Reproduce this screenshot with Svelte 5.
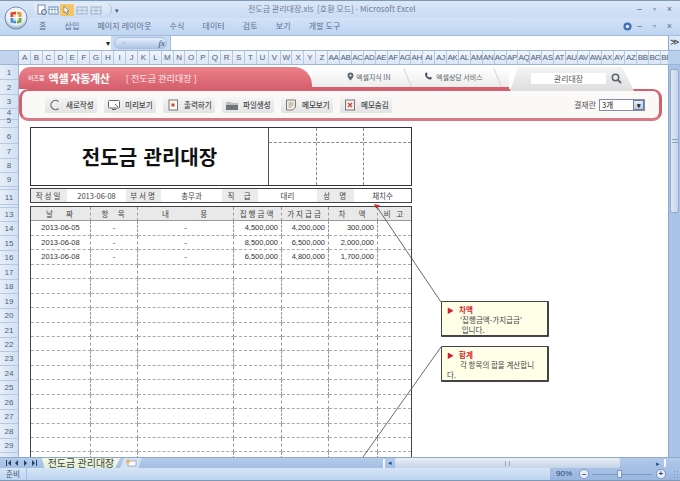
<script>
  const ribbonTabs = ['홈', '삽입', '페이지 레이아웃', '수식', '데이터', '검토', '보기', '개발 도구'];
  const letters = 'ABCDEFGHIJKLMNOPQRSTUVWXYZ'.split('');
  const cols = [...letters, ...letters.map((l) => 'A' + l), 'BB', 'BC', 'BD'];
  const rowHeads = [
    [1, 15], [2, 14.5], [3, 14.5], [4, 11], [5, 8], [6, 16], [7, 14.5], [8, 14.5], [9, 14], ['', 3], [11, 15], ['', 1]
  ];
  for (let n = 13; n <= 29; n++) rowHeads.push([n, n === 13 ? 14 : 14.44]);
  rowHeads.push(['', 14.44]);
  const tools = [
    ['새로작성', 'new'], ['미리보기', 'view'], ['출력하기', 'print'],
    ['파일생성', 'file'], ['메모보기', 'memo'], ['메모숨김', 'hide']
  ];
  const headers = ['날   짜', '항  목', '내        용', '집행금액', '가지급금', '차   액', '비 고'];
  const data = [
    ['2013-06-05', '-', '-', '4,500,000', '4,200,000', '300,000', ''],
    ['2013-06-08', '-', '-', '8,500,000', '6,500,000', '2,000,000', ''],
    ['2013-06-08', '-', '-', '6,500,000', '4,800,000', '1,700,000', '']
  ];
  const rows = [...data];
  while (rows.length < 17) rows.push(['', '', '', '', '', '', '']);
</script>

<div class="app">
  <svg class="orb" width="24" height="24" viewBox="0 0 26 26">
    <defs>
      <radialGradient id="orbg" cx="50%" cy="35%" r="65%">
        <stop offset="0" stop-color="#ffffff" />
        <stop offset="0.7" stop-color="#e6edf6" />
        <stop offset="1" stop-color="#8ea3bf" />
      </radialGradient>
    </defs>
    <circle cx="13" cy="13" r="12" fill="url(#orbg)" stroke="#6f86a6" />
    <path d="M7 7 L13 6 L13 12 L7 12 Z" fill="#d9482b" />
    <path d="M14 6 L19 7 L19 12 L14 12 Z" fill="#e09a2a" />
    <path d="M7 13 L13 13 L13 19 L7 18 Z" fill="#4a8fd0" />
    <path d="M14 13 L19 13 L19 18 L14 19 Z" fill="#78a83a" />
    <rect x="10" y="9" width="6" height="7" fill="#fff" opacity="0.75" />
  </svg>

  <header class="titlebar">
    <div class="qat">
      <svg width="76" height="12" viewBox="0 0 76 12">
        <rect x="25" y="0" width="14" height="12" rx="1" fill="#f6c56a" />
        <rect x="3" y="1" width="7" height="9" fill="#fff" stroke="#7a8798" />
        <circle cx="9" cy="8" r="2.4" fill="#cfe0f2" stroke="#55657c" />
        <rect x="14" y="3" width="9" height="7" fill="#fff" stroke="#6d8fb8" />
        <path d="M14 5.5h9M17 3v7M20 3v7" stroke="#6d8fb8" stroke-width="0.7" />
        <path d="M29 2l5 5-2.2.2 1.2 2.6-1.2.5-1.2-2.6L29 9z" fill="#fff" stroke="#566" stroke-width="0.6" />
        <rect x="42" y="3" width="10" height="7" fill="#dbe5f1" stroke="#9fb2c9" />
        <path d="M42 6.5h10M47 3v7" stroke="#9fb2c9" stroke-width="0.7" />
        <rect x="56" y="3" width="10" height="7" fill="#dbe5f1" stroke="#9fb2c9" />
        <path d="M56 6.5h10M61 3v7" stroke="#9fb2c9" stroke-width="0.7" />
      </svg>
    </div>
    <span class="qatarrow">▾</span>
    <div class="wintitle">전도금 관리대장.xls  [호환 모드] - Microsoft Excel</div>
    <div class="winbtns"><span>–</span><span>▫</span><span>×</span></div>
  </header>

  <nav class="ribbon">
    <div class="rtabs">
      {#each ribbonTabs as t}<span>{t}</span>{/each}
    </div>
    <div class="rhelp">
      <svg class="help" width="9" height="9" viewBox="0 0 10 10"><circle cx="5" cy="5" r="4.5" fill="#3d6fb5" /><circle cx="5" cy="5" r="2" fill="#dfe9f6" /></svg>
      <span>–</span><span>▫</span><span>×</span>
    </div>
  </nav>

  <div class="fbar">
    <div class="namebox"><span>▾</span></div>
    <div class="fxpill"><span class="circ">◦</span><i>fx</i></div>
    <div class="finput"></div>
    <div class="fexpand">≫</div>
  </div>

  <div class="colhead">
    <div class="corner"></div>
    {#each cols as c}<div class="col">{c}</div>{/each}
    <div class="colscroll"></div>
  </div>

  <div class="main">
    <div class="rownums">
      {#each rowHeads as r}
        <div class="rownum" style="height:{r[1]}px">{r[0]}</div>
      {/each}
    </div>

    <div class="sheet">
      <section class="banner">
        <div class="bhead">
          <div class="pinkhead">
            <span class="brand">비즈몸</span>
            <strong>엑셀 자동계산</strong>
            <span class="sub">[ 전도금 관리대장 ]</span>
          </div>
          <div class="links">
            <div class="link one">
              <svg width="7" height="9" viewBox="0 0 7 9"><path d="M3.5 0.5a3 3 0 0 1 3 3c0 2-3 5-3 5s-3-3-3-5a3 3 0 0 1 3-3z" fill="#5d6b72" /><circle cx="3.5" cy="3.4" r="1" fill="#fff" /></svg>
              엑셀지식 IN
            </div>
            <div class="link two">
              <svg width="10" height="9" viewBox="0 0 10 9"><path d="M1 1.5c0 3.5 2.5 6 6 6l1-1.7-2-1-.8.8C4 4.900 3.200 4 2.800 3l.9-.8-1-2z" fill="#46525a" /></svg>
              엑셀상담 서비스
            </div>
          </div>
          <div class="searchtab">
            <div class="searchbox">관리대장</div>
            <svg width="11" height="11" viewBox="0 0 11 11"><circle cx="4.500" cy="4.500" r="3.200" fill="none" stroke="#5a6670" stroke-width="1.500" /><path d="M7 7l3 3" stroke="#5a6670" stroke-width="1.800" /></svg>
          </div>
        </div>
        <div class="panel">
          <div class="tools">
            {#each tools as tool}
              <div class="tool">
                <svg width="14" height="12" viewBox="0 0 14 12">
                  {#if tool[1] === 'new'}
                    <path d="M10.500 2.500A4.600 4.600 0 1 0 10.500 9.500" fill="none" stroke="#6f7377" stroke-width="1.300" />
                  {:else if tool[1] === 'view'}
                    <rect x="1.500" y="1.500" width="11" height="7.500" rx="1" fill="#fff" stroke="#666" />
                    <path d="M5 10.500h4M8 5l3 3" stroke="#666" />
                  {:else if tool[1] === 'print'}
                    <rect x="3" y="1" width="8.500" height="10" fill="#fdf7ef" stroke="#777" />
                    <rect x="5.500" y="4.500" width="3" height="3" fill="#c0503d" />
                  {:else if tool[1] === 'file'}
                    <path d="M1 3h4l1 1h7v7H1z" fill="#6f7478" />
                    <path d="M1 3h4l1 1h7v2H1z" fill="#b9bdc0" />
                  {:else if tool[1] === 'memo'}
                    <path d="M2.500 1h9v7l-3 3h-6z" fill="#f6efe0" stroke="#777" />
                    <path d="M4.500 4h5M4.500 6h5M4.500 8h3" stroke="#999" />
                  {:else}
                    <rect x="2.500" y="1" width="9" height="10" fill="#f9ecea" stroke="#777" />
                    <path d="M5 4l4 4M9 4l-4 4" stroke="#b8473a" stroke-width="1.200" />
                  {/if}
                </svg>
                <span>{tool[0]}</span>
              </div>
            {/each}
          </div>
          <div class="approval">
            <span>결재란</span>
            <div class="select">3개<b>▾</b></div>
          </div>
        </div>
      </section>

      <section class="titleblock">
        <div class="bigtitle">전도금 관리대장</div>
        <div class="sign">
          {#each Array(3) as _}
            <div class="signcol"><div></div><div></div></div>
          {/each}
        </div>
      </section>

      <section class="info">
        <div class="k">작성일</div><div class="v">2013-06-08</div>
        <div class="k">부서명</div><div class="v">총무과</div>
        <div class="k">직  급</div><div class="v">대리</div>
        <div class="k">성  명</div><div class="v">채치수</div>
      </section>

      <section class="ledger">
        {#each headers as h}<div class="th">{h}</div>{/each}
        {#each rows as row}
          {#each row as cell, i}
            <div class="td" class:num={i >= 3} class:ctr={i < 3}>{cell}</div>
          {/each}
        {/each}
      </section>

      <svg class="leaders" width="649" height="392" viewBox="0 0 649 392">
        <path d="M422 237L358 142" stroke="#444" stroke-width="0.800" />
        <path d="M355 139l6 1.500-3.800 3z" fill="#d21f2b" />
        <path d="M422 282L344 392" stroke="#444" stroke-width="0.800" />
      </svg>

      <aside class="note first">
        <div class="ntitle"><em>▶</em><b>차액</b></div>
        <p class="ind">'집행금액-가지급금'<br />&nbsp;입니다.</p>
      </aside>
      <aside class="note second">
        <div class="ntitle"><em>▶</em><b>합계</b></div>
        <p class="ind">각 항목의 합을 계산합니<br /><span class="out">다.</span></p>
      </aside>
    </div>

    <div class="vscroll">
      <div class="vthumb"><i></i></div>
    </div>
  </div>

  <div class="sheetbar">
    <div class="nav">
      <svg width="34" height="8" viewBox="0 0 34 8" fill="#23406b">
        <path d="M1 1h1v6H1zM6 1v6L3 4zM13 1v6l-3-3zM19 1v6l3-3zM27 1v6l3-3zM31 1h1v6h-1z" />
      </svg>
    </div>
    <div class="stab">전도금 관리대장</div>
    <div class="newtab">
      <svg width="12" height="8" viewBox="0 0 12 8"><rect x="3" y="2" width="8" height="5" fill="#fff" stroke="#7f93ad" stroke-width="0.700" /><circle cx="3" cy="2.500" r="2" fill="#e8b75a" /></svg>
    </div>
    <div class="barfill"></div>
    <div class="hsplit"></div>
    <div class="harrow">◂</div>
    <div class="htrack"><i></i></div>
    <div class="hright"><span>▸</span><u></u></div>
  </div>

  <footer class="status">
    <span class="ready">준비</span>
    <div class="zoomarea">
      <span class="pct">90%</span>
      <span class="zbtn">–</span>
      <span class="zslider"><i></i></span>
      <span class="zbtn">+</span>
      <span class="grip"></span>
    </div>
  </footer>
</div>

<style>
  :global(body) {
    margin: 0;
    background: #fff;
  }
  * {
    box-sizing: border-box;
  }
  .app {
    position: relative;
    width: 680px;
    height: 481px;
    overflow: hidden;
    display: flex;
    flex-direction: column;
    font-family: 'Noto Sans CJK KR', 'Liberation Sans', sans-serif;
    color: #333;
    background: #c4d8f1;
    border-top: 1px solid #7e98b8;
  }
  .orb {
    position: absolute;
    left: 4px;
    top: 5px;
    z-index: 3;
  }

  .titlebar {
    height: 17px;
    flex: none;
    display: flex;
    align-items: center;
    background: linear-gradient(#dbe8f8, #c9dcf4);
    position: relative;
    padding-left: 34px;
  }
  .qat {
    height: 13px;
    width: 78px;
    display: flex;
    align-items: center;
    padding-left: 1px;
    background: linear-gradient(#e4eefa, #d0e0f4);
    border-radius: 3px 8px 8px 3px;
    border-right: 1px solid #a9bfdc;
  }
  .qatarrow {
    font-size: 7px;
    margin-left: 3px;
    color: #44556e;
  }
  .wintitle {
    position: absolute;
    left: 248px;
    top: 2px;
    font-size: 8px;
    line-height: 12px;
    white-space: pre;
    color: #6d7d94;
  }
  .winbtns,
  .rhelp {
    position: absolute;
    right: 7px;
    top: 3px;
    display: flex;
    gap: 8px;
    align-items: center;
    font: 9px/10px 'Liberation Sans', sans-serif;
    color: #5a6c86;
  }
  .winbtns span,
  .rhelp span {
    width: 7px;
    text-align: center;
  }
  .help {
    margin-right: -4px;
  }

  .ribbon {
    height: 17px;
    flex: none;
    position: relative;
    background: linear-gradient(#d4e3f7, #bdd4f1);
  }
  .rtabs {
    display: flex;
    gap: 18px;
    padding-left: 39px;
    font-size: 8px;
    letter-spacing: 0.1px;
    line-height: 16px;
    color: #5b6e8e;
    white-space: nowrap;
  }

  .fbar {
    height: 16px;
    flex: none;
    display: flex;
    align-items: stretch;
    background: #c9dbf2;
    border-top: 1px solid #a6bdd9;
    border-bottom: 1px solid #9db6d5;
  }
  .namebox {
    width: 111px;
    background: #fff;
    text-align: right;
    padding-right: 1px;
    font-size: 8px;
    line-height: 13px;
    color: #222;
  }
  .fxpill {
    width: 53px;
    margin: 1px 3px;
    border-radius: 6px;
    background: linear-gradient(#e5eefb, #aec6e6);
    border: 1px solid #a9bfdc;
    display: flex;
    justify-content: space-between;
    align-items: center;
    padding: 0 1px 0 7px;
    font: 9px/10px 'Liberation Serif', serif;
    color: #3c4a5e;
  }
  .circ {
    color: #8ca5c4;
  }
  .finput {
    flex: 1;
    background: #fff;
    border-left: 1px solid #a6bdd9;
  }
  .fexpand {
    width: 12px;
    background: #dce8f7;
    border-left: 1px solid #8ca8c9;
    font: 9px/13px 'Liberation Sans', sans-serif;
    text-align: center;
    color: #333;
  }

  .colhead {
    height: 14px;
    flex: none;
    display: flex;
    overflow: hidden;
    position: relative;
    background: linear-gradient(#f1f5fb, #dbe6f5);
    border-bottom: 1px solid #9db6d5;
  }
  .corner {
    width: 19px;
    flex: none;
    background: #c3d5ec;
    border-right: 1px solid #9db6d5;
  }
  .col {
    width: 11.9px;
    flex: none;
    border-right: 1px solid #b5c9e2;
    font: 8px/13px 'Liberation Sans', sans-serif;
    letter-spacing: -0.3px;
    text-align: center;
    color: #4e6078;
    white-space: nowrap;
    overflow: hidden;
  }
  .colscroll {
    position: absolute;
    right: 0;
    top: 0;
    width: 12px;
    height: 13px;
    background: #b9cfeb;
  }

  .main {
    height: 392px;
    flex: none;
    display: flex;
    overflow: hidden;
    background: #fff;
  }
  .rownums {
    width: 19px;
    flex: none;
    background: linear-gradient(90deg, #e6eef9, #d2e0f2);
    border-right: 1px solid #9db6d5;
  }
  .rownum {
    border-bottom: 1px solid #b5c9e2;
    font: 8px/9px 'Liberation Sans', sans-serif;
    display: flex;
    align-items: flex-end;
    justify-content: center;
    padding-bottom: 2px;
    color: #4e6078;
    overflow: visible;
  }

  .sheet {
    position: relative;
    width: 649px;
    flex: none;
    overflow: hidden;
    padding-top: 2px;
    background: #fff;
  }

  .banner {
    width: 643px;
  }
  .bhead {
    height: 22px;
    display: flex;
    align-items: stretch;
  }
  .pinkhead {
    width: 293px;
    flex: none;
    display: flex;
    align-items: center;
    padding: 0 0 0 9px;
    color: #fff;
    background: linear-gradient(#ec8189, #d55f6d);
    border-radius: 11px 18px 0 0;
    white-space: nowrap;
  }
  .brand {
    font-size: 6px;
    margin-right: 4px;
    margin-bottom: 2px;
  }
  .pinkhead strong {
    font-size: 11px;
    letter-spacing: -0.3px;
    margin-right: 16px;
    margin-bottom: 1px;
  }
  .sub {
    font-size: 9px;
    letter-spacing: 0.1px;
    color: #fde9ea;
  }
  .links {
    width: 197px;
    flex: none;
    display: flex;
    font-size: 7px;
    color: #59656c;
    white-space: nowrap;
    border-bottom: 2px solid #d55f6d;
    background: linear-gradient(#ffffff, #ececec);
    margin-top: 1px;
  }
  .link {
    position: relative;
    display: flex;
    align-items: center;
    gap: 2px;
    line-height: 8px;
    padding-bottom: 2px;
  }
  .one {
    padding-left: 35px;
    width: 99px;
  }
  .one::after,
  .two::after {
    content: '';
    position: absolute;
    right: 3px;
    top: 0;
    bottom: 0;
    width: 1px;
    background: #d4d4d4;
    transform: skewX(22deg);
  }
  .two {
    padding-left: 13px;
    width: 90px;
  }
  .searchtab {
    width: 124px;
    flex: none;
    height: 24px;
    margin-left: 1px;
    position: relative;
    z-index: 1;
    display: flex;
    align-items: center;
    gap: 5px;
    padding: 0 0 2px 21px;
    background: linear-gradient(#f4f4f4, #dedede);
    clip-path: polygon(8px 0, 112px 0, 124px 100%, 0 100%);
  }
  .searchbox {
    width: 75px;
    height: 11px;
    background: #fff;
    font-size: 8px;
    line-height: 11px;
    text-align: center;
    color: #555;
  }
  .panel {
    height: 32px;
    display: flex;
    align-items: center;
    justify-content: space-between;
    background: #fbf9f8;
    border: 3px solid #d55f6d;
    border-top-width: 2px;
    border-bottom-color: #d87984;
    border-radius: 9px;
    padding: 0 14px 0 23px;
  }
  .tools {
    display: flex;
    gap: 7px;
  }
  .tool {
    width: 52px;
    height: 16px;
    display: flex;
    align-items: center;
    gap: 4px;
    padding-left: 3px;
    background: linear-gradient(#f5f5f5, #e3e3e3);
    border-radius: 2px;
    font-size: 7.500px;
    font-weight: 500;
    color: #484848;
    white-space: nowrap;
    flex: none;
  }
  .approval {
    display: flex;
    align-items: center;
    gap: 3px;
    font-size: 8px;
    color: #555;
  }
  .select {
    width: 46px;
    height: 12px;
    background: #fff;
    border: 1px solid #88a;
    font-size: 7.500px;
    line-height: 10px;
    padding-left: 2px;
    display: flex;
    justify-content: space-between;
    color: #222;
  }
  .select b {
    width: 11px;
    background: linear-gradient(#e6edf7, #b7c8e1);
    border: 1px solid #6c7fa0;
    text-align: center;
    font-size: 7px;
    line-height: 8px;
  }

  .titleblock,
  .info,
  .ledger {
    margin-left: 11px;
    width: 382px;
  }
  .titleblock {
    margin-top: 6px;
    height: 59px;
    display: flex;
    border: 1px solid #333;
  }
  .bigtitle {
    width: 238px;
    flex: none;
    border-right: 1px solid #555;
    font-size: 20px;
    font-weight: 700;
    line-height: 57px;
    text-align: center;
    color: #111;
    word-spacing: 2px;
  }
  .sign {
    flex: 1;
    display: flex;
  }
  .signcol {
    flex: 1;
    border-right: 1px dashed #888;
    display: flex;
    flex-direction: column;
  }
  .signcol:last-child {
    border-right: 0;
  }
  .signcol div:first-child {
    height: 15px;
    border-bottom: 1px dashed #888;
  }

  .info {
    margin-top: 2px;
    height: 15px;
    display: grid;
    grid-template-columns: 36px 59px 35px 61px 36px 59px 37px 1fr;
    border: 1px solid #444;
    font-size: 7.500px;
    line-height: 13px;
    text-align: center;
  }
  .k {
    background: #ebebeb;
    letter-spacing: 2px;
    white-space: pre;
    color: #444;
  }
  .v {
    color: #444;
  }

  .ledger {
    margin-top: 3px;
    display: grid;
    grid-template-columns: 60px 47px 96px 48px 47px 49px 1fr;
    grid-auto-rows: 14.44px;
    border: 1px solid #444;
    border-bottom: 0;
    font-size: 7.500px;
  }
  .th,
  .td {
    border-right: 1px dashed #999;
    border-bottom: 1px dashed #aaa;
    line-height: 13px;
    white-space: pre;
    overflow: hidden;
  }
  .th:nth-child(7n),
  .td:nth-child(7n) {
    border-right: 0;
  }
  .th {
    background: #e9e9e9;
    text-align: center;
    letter-spacing: 2px;
    color: #444;
    border-bottom: 1px solid #999;
  }
  .td {
    font-family: 'Liberation Sans', sans-serif;
    color: #333;
  }
  .ctr {
    text-align: center;
  }
  .num {
    text-align: right;
    padding-right: 3px;
  }

  .leaders {
    position: absolute;
    left: 0;
    top: 0;
  }
  .note {
    position: absolute;
    left: 422px;
    width: 108px;
    height: 36px;
    background: #ffffe8;
    border: 1px solid #444;
    border-right-width: 2px;
    border-bottom-width: 2px;
    border-radius: 1px;
    padding: 2px 5px;
    font-size: 7.500px;
    line-height: 10px;
    color: #444;
  }
  .first {
    top: 236px;
  }
  .second {
    top: 281px;
  }
  .ntitle {
    display: flex;
    gap: 5px;
    align-items: center;
    height: 11px;
    color: #d21f2b;
  }
  .ntitle em {
    font-style: normal;
    font-size: 7px;
  }
  .note p {
    margin: 0;
  }
  .ind {
    padding-left: 13px;
  }
  .out {
    margin-left: -13px;
  }

  .vscroll {
    flex: 1;
    background: #a9c4e6;
    border-left: 1px solid #8ea9cc;
    padding: 4px 1px 0;
  }
  .vthumb {
    height: 144px;
    background: linear-gradient(90deg, #dfe8f5, #c3d3e8);
    border: 1px solid #94abca;
    border-radius: 2px;
    display: flex;
    align-items: center;
    justify-content: center;
  }
  .vthumb i {
    width: 6px;
    height: 4px;
    border-top: 1px solid #8ea3bf;
    border-bottom: 1px solid #8ea3bf;
  }

  .sheetbar {
    height: 11px;
    flex: none;
    display: flex;
    align-items: stretch;
    background: linear-gradient(#b3cbea, #a3bfe3);
    border-top: 1px solid #8ea9cc;
  }
  .nav {
    width: 42px;
    flex: none;
    padding-left: 5px;
    display: flex;
    align-items: center;
  }
  .stab {
    width: 78px;
    flex: none;
    background: linear-gradient(#f6f8e8, #e2ecd8);
    font-size: 10px;
    line-height: 10px;
    text-align: center;
    color: #3a4a3a;
    white-space: nowrap;
    overflow: visible;
    clip-path: polygon(0 0, 100% 0, 94% 100%, 3% 100%);
  }
  .newtab {
    width: 22px;
    flex: none;
    background: #d4e1f2;
    clip-path: polygon(0 100%, 18% 0, 100% 0, 82% 100%);
    display: flex;
    align-items: center;
    justify-content: center;
  }
  .barfill {
    width: 241px;
    flex: none;
  }
  .hsplit {
    width: 2px;
    flex: none;
    margin-top: 1px;
    background: #f4f7fb;
  }
  .harrow {
    width: 10px;
    flex: none;
    font-size: 7px;
    line-height: 9px;
    text-align: center;
    color: #2b4d7c;
  }
  .htrack {
    width: 225px;
    flex: none;
    background: linear-gradient(#e8eef7, #c5d3e5);
    border-radius: 2px;
    display: flex;
    align-items: center;
    justify-content: center;
  }
  .htrack i {
    width: 5px;
    height: 5px;
    border-left: 1px solid #9aaac0;
    border-right: 1px solid #9aaac0;
  }
  .hright {
    flex: 1;
    display: flex;
    justify-content: flex-end;
    align-items: center;
    gap: 4px;
    padding-right: 14px;
    font-size: 7px;
    color: #2b4d7c;
  }
  .hright u {
    width: 2px;
    height: 8px;
    background: #f4f7fb;
  }

  .status {
    flex: 1;
    display: flex;
    align-items: stretch;
    justify-content: space-between;
    background: linear-gradient(#d6e5f8, #bdd3ef);
    border-bottom: 1px solid #7e98b8;
  }
  .ready {
    font-size: 7.500px;
    line-height: 12px;
    padding: 0 6px;
    border-right: 1px solid #a9bfdc;
    color: #44566e;
    width: 27px;
  }
  .zoomarea {
    width: 130px;
    display: flex;
    align-items: center;
    background: linear-gradient(#a8c2e6, #98b6df);
    padding-left: 6px;
    font: 8px/12px 'Liberation Sans', sans-serif;
    color: #33445e;
  }
  .pct {
    width: 24px;
  }
  .zbtn {
    width: 10px;
    height: 10px;
    margin-left: 1px;
    border-radius: 50%;
    background: #e6eef9;
    border: 1px solid #7f98ba;
    text-align: center;
    line-height: 8px;
    font-weight: 700;
  }
  .zslider {
    width: 65px;
    height: 1px;
    margin: 0 3px;
    background: #7f98ba;
    position: relative;
  }
  .zslider i {
    position: absolute;
    left: 25px;
    top: -4px;
    width: 5px;
    height: 8px;
    background: #e8eef8;
    border: 1px solid #7f98ba;
  }
  .grip {
    width: 8px;
    height: 8px;
    margin-left: 7px;
    background: radial-gradient(#7f98ba 35%, transparent 40%) 0 0 / 3px 3px;
  }
</style>
